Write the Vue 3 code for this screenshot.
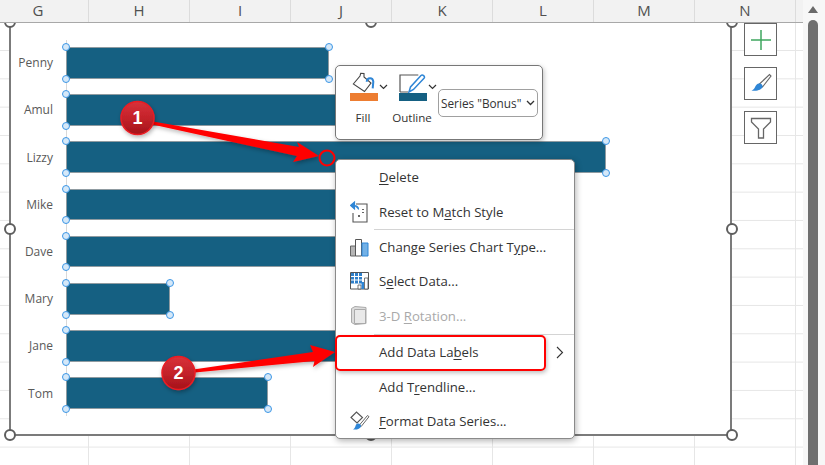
<script setup>
const columns = ['G', 'H', 'I', 'J', 'K', 'L', 'M', 'N']
const bars = [
  { name: 'Penny', width: 263 },
  { name: 'Amul', width: 340 },
  { name: 'Lizzy', width: 540 },
  { name: 'Mike', width: 340 },
  { name: 'Dave', width: 340 },
  { name: 'Mary', width: 104 },
  { name: 'Jane', width: 340 },
  { name: 'Tom', width: 202 }
]
const frameHandles = ['tl', 'tc', 'tr', 'ml', 'mr', 'bl', 'bc', 'br']
</script>

<template>
  <div class="screen">
    <header class="col-header">
      <div v-for="c in columns" :key="c" class="col-cell">{{ c }}</div>
    </header>
    <div class="sheet"></div>

    <div class="scrollbar">
      <span class="scroll-up"></span>
      <span class="scroll-thumb"></span>
    </div>

    <section class="chart">
      <span v-for="h in frameHandles" :key="h" class="frame-handle" :class="h"></span>
      <div class="plot">
        <span class="axis"></span>
        <div v-for="b in bars" :key="b.name" class="row">
          <span class="cat">{{ b.name }}</span>
          <div class="bar" :style="{ width: b.width + 'px' }">
            <i class="pt a"></i><i class="pt b"></i><i class="pt c"></i><i class="pt d"></i>
          </div>
        </div>
      </div>
    </section>

    <aside class="side-tools">
      <button class="side-btn">
        <svg width="24" height="24" viewBox="0 0 24 24"><path d="M12 2v20M2 12h20" stroke="#3fa65f" stroke-width="1.500" fill="none"/></svg>
      </button>
      <button class="side-btn">
        <svg width="24" height="24" viewBox="0 0 24 24">
          <path d="M10.500 12 20.500 2.500l1.500 1.500-8.500 11z" fill="#fff" stroke="#666" stroke-width="1.100"/>
          <path d="M10 11.500c2.500 0 4 1.700 3.500 3.500-.8 2.500-5 4.500-11 3.500 2.500-.8 3-2.500 3.800-4 .7-1.500 2-3 3.700-3z" fill="#2f86d6"/>
        </svg>
      </button>
      <button class="side-btn">
        <svg width="24" height="24" viewBox="0 0 24 24"><path d="M2.500 2.500h19v3.500l-7 7v9h-5v-9l-7-7z" fill="#fff" stroke="#666" stroke-width="1.300"/></svg>
      </button>
    </aside>

    <div class="mini">
      <div class="mini-tool">
        <div class="mini-icon">
          <div class="mini-glyph">
            <svg width="28" height="21" viewBox="0 0 28 21">
              <path d="M3.300 12 10 4l.7-2.700L14 1.500 14 5l7 6-6.500 8.500z" fill="#fff" stroke="#444" stroke-width="1.100"/>
              <path d="M16.700 9.700C17 5.500 22.800 5 23.300 9.700l-.6 6.600" fill="none" stroke="#2f86d6" stroke-width="2"/>
            </svg>
            <span class="swatch orange"></span>
          </div>
          <svg class="chev" width="9" height="6" viewBox="0 0 9 6"><path d="m1 1 3.500 3.500L8 1" fill="none" stroke="#333" stroke-width="1.200"/></svg>
        </div>
        <span class="mini-label">Fill</span>
      </div>
      <div class="mini-tool">
        <div class="mini-icon">
          <div class="mini-glyph">
            <svg width="28" height="21" viewBox="0 0 28 21">
              <path d="M1 20V3h18.300M1 20h8.300" fill="none" stroke="#555" stroke-width="1.200"/>
              <path d="m10 20 1.500-5L22 3.500c1.500-1.500 4.500 1 3 2.800L14.500 17.500z" fill="#fff" stroke="#2f86d6" stroke-width="1.500"/>
            </svg>
            <span class="swatch teal"></span>
          </div>
          <svg class="chev" width="9" height="6" viewBox="0 0 9 6"><path d="m1 1 3.500 3.500L8 1" fill="none" stroke="#333" stroke-width="1.200"/></svg>
        </div>
        <span class="mini-label">Outline</span>
      </div>
      <div class="series-select">
        <span>Series "Bonus"</span>
        <svg width="9" height="6" viewBox="0 0 9 6"><path d="m1 1 3.500 3.500L8 1" fill="none" stroke="#333" stroke-width="1.300"/></svg>
      </div>
    </div>

    <nav class="menu">
      <div class="item"><span class="ico"></span><span><u>D</u>elete</span></div>
      <div class="item">
        <span class="ico">
          <svg width="20" height="24" viewBox="0 0 20 24">
            <path d="M6 4h11v18H3v-9" fill="#fff" stroke="#555" stroke-width="1.100"/>
            <path d="M.5 5.500 4.500 2v7zM4 5.500c3 0 4.500 1.500 4.500 4" fill="#2f86d6" stroke="#2f86d6" stroke-width="1.200"/>
            <path d="M8 15h2v2H8zM12 9h2v1h-2zM12 12h2v1h-2z" fill="#666"/>
          </svg>
        </span>
        <span>Reset to M<u>a</u>tch Style</span>
      </div>
      <div class="sep"></div>
      <div class="item">
        <span class="ico">
          <svg width="20" height="20" viewBox="0 0 20 20">
            <path d="M.5 9h5v10h-5z" fill="#b5b5b5" stroke="#666"/>
            <path d="M5.500 2.500h6V19h-6z" fill="#fff" stroke="#555"/>
            <path d="M12 6h6v13h-6z" fill="#73b1e6" stroke="#2f86d6"/>
          </svg>
        </span>
        <span>Change Series Chart T<u>y</u>pe...</span>
      </div>
      <div class="item">
        <span class="ico">
          <svg width="20" height="20" viewBox="0 0 20 20">
            <path d="M.5 1.500h18V18H.5z" fill="#fff" stroke="#555"/>
            <path d="M1 2h11v10.500H1z" fill="#2f7fc9"/>
            <path d="M4.500 2v10.500M8.500 2v10.500M1 5.500h11M1 9h11" stroke="#fff" stroke-width="1"/>
            <path d="M8 14h3v4H8z" fill="#fff" stroke="#555" stroke-width=".8"/>
            <path d="M11.500 11H14v7h-2.500z" fill="#2f86d6"/>
            <path d="M14.500 7h3.500v11h-3.500z" fill="#fff" stroke="#555" stroke-width=".8"/>
          </svg>
        </span>
        <span>S<u>e</u>lect Data...</span>
      </div>
      <div class="item disabled">
        <span class="ico">
          <svg width="20" height="21" viewBox="0 0 20 21">
            <path d="M1.500 3.500 5 1.500l11 1v16l-11 1-3.500-2z" fill="#dcdcdc" stroke="#aaa"/>
            <path d="M4.500 4.500h11v14h-11z" fill="#e9e9e9" stroke="#aaa"/>
          </svg>
        </span>
        <span>3-D <u>R</u>otation...</span>
      </div>
      <div class="sep low"></div>
      <div class="item">
        <span class="ico"></span>
        <span>Add Data La<u>b</u>els</span>
        <svg class="sub" width="8" height="13" viewBox="0 0 8 13"><path d="m1 1 5.500 5.500L1 12" fill="none" stroke="#333" stroke-width="1.100"/></svg>
      </div>
      <div class="item"><span class="ico"></span><span>Add T<u>r</u>endline...</span></div>
      <div class="item">
        <span class="ico">
          <svg width="20" height="21" viewBox="0 0 20 21">
            <path d="M1 7.500 6.500 2l1 1 5 4.500L7 13z" fill="#fff" stroke="#555" stroke-width="1.100"/>
            <path d="M9 15.500 17.500 5.500l1.500 1.200-8 10z" fill="#fff" stroke="#666"/>
            <path d="M8 13.500c2 0 3.500 1.500 3 3-.7 2.200-4 3.500-8 3 1.500-.7 2-2 2.500-3.500.4-1.500 1-2.500 2.500-2.500z" fill="#2f86d6"/>
          </svg>
        </span>
        <span><u>F</u>ormat Data Series...</span>
      </div>
    </nav>

    <div class="callout-box"></div>

    <svg class="annot" width="825" height="465" viewBox="0 0 825 465">
      <defs>
        <filter id="soft" x="-20%" y="-50%" width="140%" height="200%">
          <feDropShadow dx="1" dy="2" stdDeviation="2" flood-color="#000" flood-opacity=".3"/>
        </filter>
        <linearGradient id="badge" x1="0" y1="0" x2="0" y2="1">
          <stop offset="0" stop-color="#d8323a"/>
          <stop offset=".5" stop-color="#c4222a"/>
          <stop offset="1" stop-color="#a4131a"/>
        </linearGradient>
      </defs>
      <path d="M150 121 299 147 297 142 319 156 293 162 297 156 150 124z" fill="#f00" filter="url(#soft)"/>
      <circle cx="327" cy="158" r="7.500" fill="none" stroke="#f00" stroke-width="2"/>
      <path d="M190 370 313 352 310 345 335 352 313 367 314.500 361 190 373z" fill="#f00" filter="url(#soft)"/>
      <g filter="url(#soft)">
        <circle cx="137.500" cy="118" r="16.500" fill="url(#badge)" stroke="#ea1c24" stroke-width="1.500"/>
        <circle cx="178.500" cy="373" r="16.500" fill="url(#badge)" stroke="#ea1c24" stroke-width="1.500"/>
      </g>
    </svg>
    <span class="badge-num one">1</span>
    <span class="badge-num two">2</span>
  </div>
</template>

<style>
html, body { margin: 0; background: #fff; overflow: hidden; }
</style>

<style scoped>
.screen {
  position: relative;
  width: 825px;
  height: 465px;
  overflow: hidden;
  background: #fff;
  font-family: "Open Sans", "Noto Sans", sans-serif;
}
.col-header {
  position: relative;
  z-index: 2;
  display: flex;
  height: 22px;
  width: 815px;
  margin-left: -12px;
  background: #f2f2f2;
  border-bottom: 1px solid #a8a8a8;
}
.col-cell {
  flex: 0 0 101px;
  box-sizing: border-box;
  border-right: 1px solid #dcdcdc;
  text-align: center;
  font-size: 15px;
  line-height: 21px;
  color: #505050;
}
.sheet {
  height: 442px;
  width: 803px;
  background-image:
    linear-gradient(to right, transparent 88px, #e6e6e6 88px, #e6e6e6 89px, transparent 89px),
    linear-gradient(to bottom, #e6e6e6 1px, transparent 1px);
  background-size: 101px 100%, 100% 28.33px;
  background-position: 0 0, 0 27px;
}
.scrollbar {
  position: absolute;
  z-index: 3;
  top: 0;
  right: 0;
  width: 22px;
  height: 465px;
  box-sizing: border-box;
  padding: 6px 7px 0 5px;
  background: #f7f7f7;
  display: flex;
  flex-direction: column;
  align-items: center;
  gap: 7px;
}
.scroll-up {
  width: 0;
  height: 0;
  border-left: 5px solid transparent;
  border-right: 5px solid transparent;
  border-bottom: 7px solid #6a6a6a;
}
.scroll-thumb {
  width: 10px;
  flex: 1;
  background: #6f6f6f;
  border-radius: 5px 5px 0 0;
}
.chart {
  position: absolute;
  z-index: 1;
  left: 9px;
  top: 21px;
  width: 723px;
  height: 415px;
  box-sizing: border-box;
  background: #fff;
  border: 2px solid #7b7b7b;
}
.frame-handle {
  position: absolute;
  width: 12px;
  height: 12px;
  box-sizing: border-box;
  border-radius: 50%;
  background: #fff;
  border: 2px solid #5e5e5e;
  margin: -6px 0 0 -6px;
}
.tl { left: -1px; top: -1px; }
.tc { left: 360px; top: -1px; }
.tr { left: 721px; top: -1px; }
.ml { left: -1px; top: 206px; }
.mr { left: 721px; top: 206px; }
.bl { left: -1px; top: 412px; }
.bc { left: 360px; top: 412px; }
.br { left: 721px; top: 412px; }
.plot {
  position: relative;
  display: flex;
  flex-direction: column;
  gap: 15.6px;
  padding: 24px 0 0 0;
}
.axis {
  position: absolute;
  left: 55px;
  top: 17px;
  height: 376px;
  width: 1px;
  background: #d9d9d9;
}
.row {
  display: flex;
  align-items: center;
  height: 31.600px;
}
.cat {
  flex: 0 0 42px;
  text-align: right;
  margin-right: 13px;
  font-size: 12px;
  color: #595959;
}
.bar {
  position: relative;
  height: 100%;
  box-sizing: border-box;
  background: #156082;
  border: 1px solid #8f9ba1;
}
.pt {
  position: absolute;
  width: 8px;
  height: 8px;
  box-sizing: border-box;
  border-radius: 50%;
  background: #d5e8f8;
  border: 1.500px solid #3d97e6;
}
.a { left: -5px; top: -5px; }
.b { right: -5px; top: -5px; }
.c { left: -5px; bottom: -5px; }
.d { right: -5px; bottom: -5px; }
.side-tools {
  position: absolute;
  z-index: 2;
  left: 744px;
  top: 23px;
  display: flex;
  flex-direction: column;
  gap: 11px;
}
.side-btn {
  width: 33px;
  height: 33px;
  padding: 0;
  box-sizing: border-box;
  display: flex;
  align-items: center;
  justify-content: center;
  background: #fff;
  border: 1.500px solid #666;
  border-radius: 0;
}
.mini {
  position: absolute;
  z-index: 4;
  left: 335px;
  top: 65px;
  width: 208px;
  height: 75px;
  box-sizing: border-box;
  padding: 6px 4px 0 14px;
  display: flex;
  background: #fff;
  border: 1px solid #777;
  border-radius: 5px;
  box-shadow: 1px 2px 5px rgba(0, 0, 0, .25);
  color: #333;
}
.mini-tool {
  width: 49px;
  display: flex;
  flex-direction: column;
  align-items: flex-start;
  font-size: 11.600px;
}
.mini-icon {
  display: flex;
  align-items: center;
  gap: 1px;
}
.mini-glyph {
  display: flex;
  flex-direction: column;
}
.mini-glyph svg { height: 21px; }
.swatch {
  display: block;
  width: 28px;
  height: 8px;
}
.orange { background: #ed7d31; }
.teal { background: #156082; }
.mini-label {
  width: 26px;
  margin-top: 9px;
  display: flex;
  justify-content: center;
  white-space: nowrap;
  line-height: 16px;
}
.series-select {
  align-self: flex-start;
  margin: 17px 0 0 -10px;
  width: 100px;
  height: 28px;
  box-sizing: border-box;
  display: flex;
  align-items: center;
  justify-content: space-between;
  padding: 0 2px 0 2px;
  border: 1px solid #a0a0a0;
  border-radius: 5px;
  font-size: 11.800px;
  white-space: nowrap;
  color: #333;
}
.menu {
  position: absolute;
  z-index: 4;
  left: 335px;
  top: 159px;
  width: 240px;
  height: 280px;
  box-sizing: border-box;
  background: #fff;
  border: 1px solid #8a8a8a;
  border-radius: 5px;
  box-shadow: 1px 2px 6px rgba(0, 0, 0, .3);
  font-size: 13.200px;
  color: #333;
}
.item {
  position: relative;
  display: flex;
  align-items: center;
  height: 34.400px;
  white-space: nowrap;
}
.ico {
  flex: 0 0 43px;
  box-sizing: border-box;
  padding-left: 14px;
  display: flex;
  align-items: center;
}
.sep {
  height: 1px;
  margin-left: 38px;
  background: #d4d4d4;
}
.sep.low { margin-top: 1px; }
.disabled { color: #a9a9a9; }
.sub {
  position: absolute;
  right: 10px;
  top: 11px;
}
u { text-underline-offset: 2px; }
.callout-box {
  position: absolute;
  z-index: 5;
  left: 335px;
  top: 335px;
  width: 211px;
  height: 36px;
  box-sizing: border-box;
  border: 2px solid #f00;
  border-radius: 5px;
  box-shadow: 1px 2px 4px rgba(0, 0, 0, .25);
}
.annot {
  position: absolute;
  z-index: 6;
  left: 0;
  top: 0;
  pointer-events: none;
}
.badge-num {
  position: absolute;
  z-index: 7;
  width: 33px;
  text-align: center;
  color: #fff;
  font: bold 18px/22px "Liberation Sans", sans-serif;
}
.one { left: 121px; top: 107px; }
.two { left: 162px; top: 362px; }
</style>
